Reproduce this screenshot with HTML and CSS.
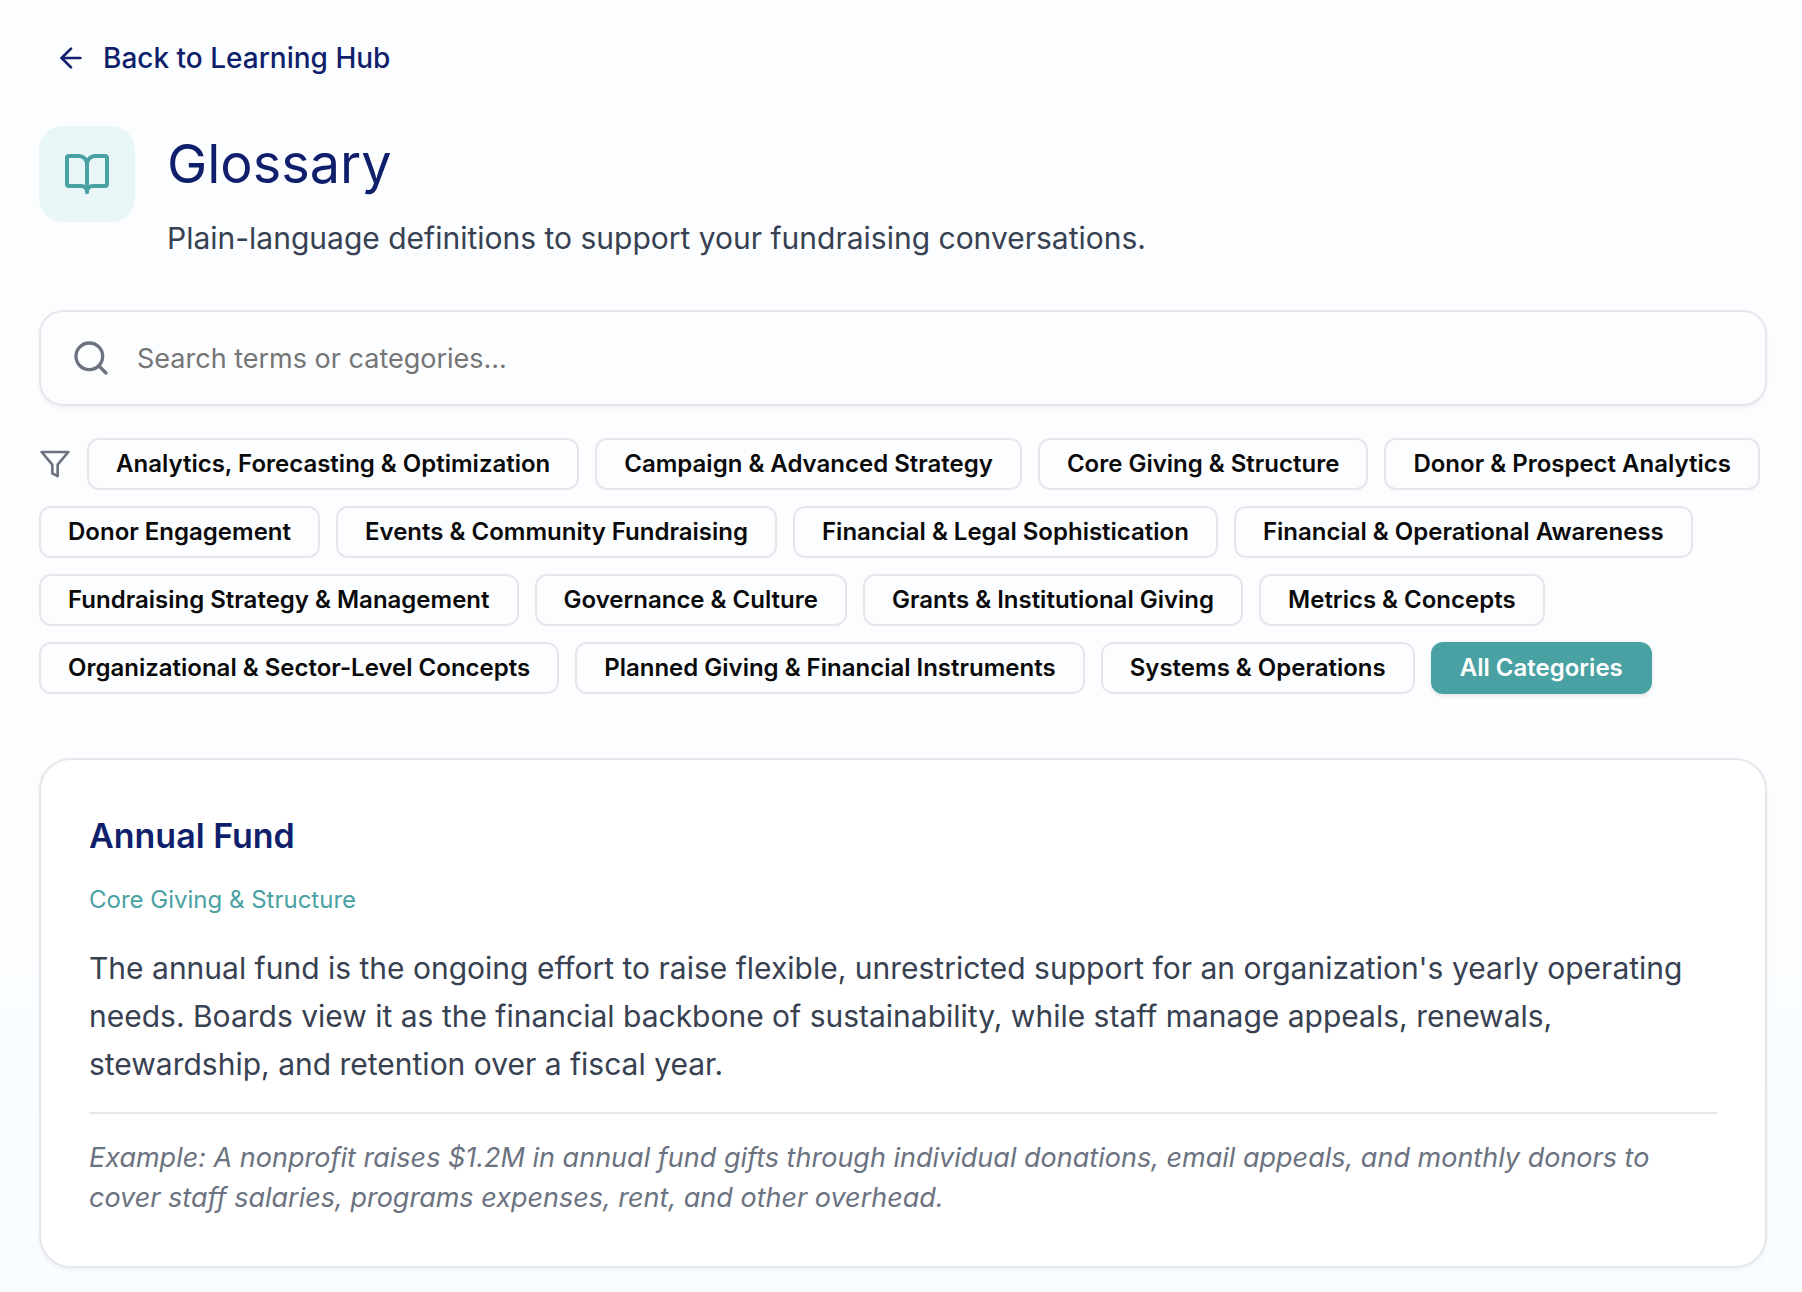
FILE: index.html
```html
<!DOCTYPE html>
<html lang="en">
<head>
    <meta charset="UTF-8">
    <meta name="viewport" content="width=device-width, initial-scale=1.0">
    <title>Glossary</title>
    <link rel="stylesheet" href="styles.css">
</head>
<body>
    <main class="container">
        <a href="#" class="back-link">
            <svg class="icon" width="32" height="32" viewBox="0 0 24 24" aria-hidden="true"><path d="m12 19-7-7 7-7"/><path d="M19 12H5"/></svg>
            Back to Learning Hub
        </a>

        <header class="page-header">
            <div class="header-icon">
                <svg class="icon" width="48" height="48" viewBox="0 0 24 24" aria-hidden="true"><path d="M12 7v14"/><path d="M3 18a1 1 0 0 1-1-1V4a1 1 0 0 1 1-1h5a4 4 0 0 1 4 4 4 4 0 0 1 4-4h5a1 1 0 0 1 1 1v13a1 1 0 0 1-1 1h-6a3 3 0 0 0-3 3 3 3 0 0 0-3-3z"/></svg>
            </div>
            <div>
                <h1>Glossary</h1>
                <p class="subtitle">Plain-language definitions to support your fundraising conversations.</p>
            </div>
        </header>

        <label class="search">
            <svg class="icon" width="40" height="40" viewBox="0 0 24 24" aria-hidden="true"><circle cx="11" cy="11" r="8"/><path d="m21 21-4.3-4.3"/></svg>
            <input type="text" id="search" placeholder="Search terms or categories..." aria-label="Search terms or categories">
        </label>

        <div class="filters">
            <svg class="icon" width="32" height="32" viewBox="0 0 24 24" aria-hidden="true"><path d="M22 3H2l8 9.46V19l4 2v-8.54L22 3z"/></svg>
            <button type="button" class="chip">Analytics, Forecasting &amp; Optimization</button>
            <button type="button" class="chip">Campaign &amp; Advanced Strategy</button>
            <button type="button" class="chip">Core Giving &amp; Structure</button>
            <button type="button" class="chip">Donor &amp; Prospect Analytics</button>
            <button type="button" class="chip">Donor Engagement</button>
            <button type="button" class="chip">Events &amp; Community Fundraising</button>
            <button type="button" class="chip">Financial &amp; Legal Sophistication</button>
            <button type="button" class="chip">Financial &amp; Operational Awareness</button>
            <button type="button" class="chip">Fundraising Strategy &amp; Management</button>
            <button type="button" class="chip">Governance &amp; Culture</button>
            <button type="button" class="chip">Grants &amp; Institutional Giving</button>
            <button type="button" class="chip">Metrics &amp; Concepts</button>
            <button type="button" class="chip">Organizational &amp; Sector-Level Concepts</button>
            <button type="button" class="chip">Planned Giving &amp; Financial Instruments</button>
            <button type="button" class="chip">Systems &amp; Operations</button>
            <button type="button" class="chip active">All Categories</button>
        </div>

        <article class="card">
            <h2>Annual Fund</h2>
            <p class="category">Core Giving &amp; Structure</p>
            <p class="definition">The annual fund is the ongoing effort to raise flexible, unrestricted support for an organization's yearly operating needs. Boards view it as the financial backbone of sustainability, while staff manage appeals, renewals, stewardship, and retention over a fiscal year.</p>
            <p class="example">Example: A nonprofit raises $1.2M in annual fund gifts through individual donations, email appeals, and monthly donors to cover staff salaries, programs expenses, rent, and other overhead.</p>
        </article>
    </main>
</body>
</html>
```
FILE: styles.css
```css
* {
    box-sizing: border-box;
}
body {
    margin: 0;
    min-height: 100vh;
    background: linear-gradient(#fcfdff 60%, #f9fdff);
    font-family: Inter, 'Liberation Sans', sans-serif;
    color: #0a0a0a;
}
.container {
    padding: 26px 35px 24px 39px;
}
h1, h2, p {
    margin: 0;
}
.icon {
    flex-shrink: 0;
    fill: none;
    stroke: currentColor;
    stroke-width: 2;
    stroke-linecap: round;
    stroke-linejoin: round;
}
.back-link {
    display: inline-flex;
    align-items: center;
    gap: 16px;
    height: 64px;
    padding: 0 16px;
    color: #101f6b;
    font-size: 28px;
    font-weight: 500;
    text-decoration: none;
}
.page-header {
    display: flex;
    align-items: flex-start;
    gap: 32px;
    margin: 36px 0 48px;
}
.header-icon {
    display: flex;
    flex-shrink: 0;
    align-items: center;
    justify-content: center;
    width: 96px;
    height: 96px;
    border-radius: 24px;
    background: #e8f6f7;
    color: #4aa1a3;
}
h1 {
    color: #101f6b;
    font-size: 54px;
    font-weight: 400;
    line-height: 76px;
}
.subtitle {
    margin-top: 12px;
    color: #374151;
    font-size: 30px;
    line-height: 48px;
}
.search {
    display: flex;
    align-items: center;
    gap: 26px;
    height: 96px;
    padding: 0 30px;
    border: 2px solid #e5e7eb;
    border-radius: 24px;
    box-shadow: 0 2px 4px rgba(0, 0, 0, 0.05);
    color: #6b7280;
}
.search input {
    flex: 1;
    padding: 0;
    border: none;
    outline: none;
    background: none;
    color: #0a0a0a;
    font-family: inherit;
    font-size: 27px;
}
.search input::placeholder {
    color: #757575;
}
.filters {
    display: flex;
    flex-wrap: wrap;
    align-items: center;
    gap: 16px;
    margin: 32px 0 64px;
    color: #6b7280;
}
.chip {
    height: 52px;
    padding: 0 27px 2px;
    border: 2px solid #e5e7eb;
    border-radius: 12px;
    background: none;
    color: #0a0a0a;
    font-family: inherit;
    font-size: 24px;
    font-weight: 600;
    cursor: pointer;
}
.chip.active {
    border-color: #4aa1a3;
    background: #4aa1a3;
    box-shadow: 0 2px 4px rgba(0, 0, 0, 0.1);
    color: white;
}
.card {
    padding: 48px;
    border: 2px solid #e5e7eb;
    border-radius: 32px;
    background: white;
    box-shadow: 0 2px 4px rgba(0, 0, 0, 0.05);
}
h2 {
    color: #101f6b;
    font-size: 34px;
    font-weight: 600;
    line-height: 56px;
}
.category {
    margin: 20px 0 28px;
    color: #4aa1a3;
    font-size: 24px;
    line-height: 32px;
}
.definition {
    color: #374151;
    font-size: 30px;
    line-height: 48px;
}
.example {
    margin-top: 24px;
    padding-top: 24px;
    border-top: 2px solid #e5e7eb;
    color: #6b7280;
    font-size: 27px;
    font-style: italic;
    line-height: 40px;
}
```
